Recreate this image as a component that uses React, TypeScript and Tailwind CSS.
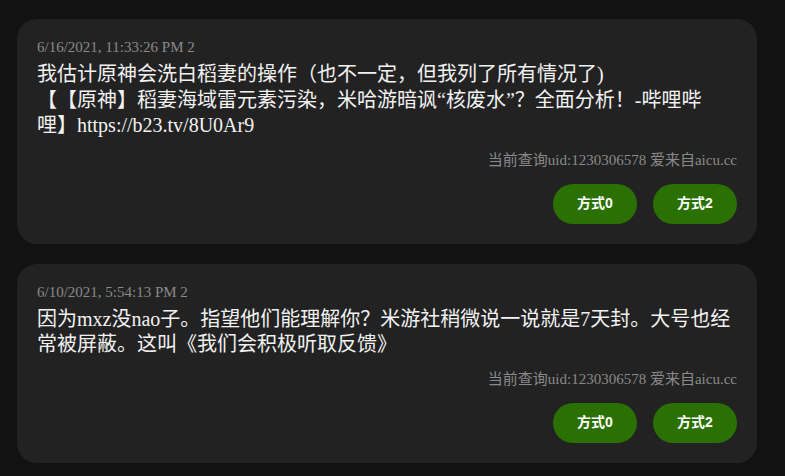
const items = [
  {
    date: '6/16/2021, 11:33:26 PM 2',
    lines: [
      '我估计原神会洗白稻妻的操作（也不一定，但我列了所有情况了)',
      '【【原神】稻妻海域雷元素污染，米哈游暗讽“核废水”？全面分析！-哔哩哔哩】https://b23.tv/8U0Ar9',
    ],
  },
  {
    date: '6/10/2021, 5:54:13 PM 2',
    lines: ['因为mxz没nao子。指望他们能理解你？米游社稍微说一说就是7天封。大号也经常被屏蔽。这叫《我们会积极听取反馈》'],
  },
]

function Card({ date, lines }: { date: string; lines: string[] }) {
  return (
    <div className="bg-[#222222] rounded-[20px] px-5 pt-[18px] pb-5 flex flex-col">
      <div className="text-[15px] leading-5 text-[#8a8a8a]">{date}</div>
      <div className="mt-[5px] text-[20px] leading-[25.5px] text-[#f2f2f2] [text-spacing-trim:space-all]">
        {lines.map((l, i) => (
          <div key={i}>{l}</div>
        ))}
      </div>
      <div className="mt-[11px] self-end text-[15px] leading-5 text-[#8a8a8a]">当前查询uid:1230306578 爱来自aicu.cc</div>
      <div className="mt-[14px] flex justify-end gap-4">
        {['方式0', '方式2'].map((b) => (
          <button
            key={b}
            className="h-10 w-[84px] rounded-full bg-[#2a7003] text-white text-[14px] font-bold [font-family:'Liberation_Sans','Noto_Sans_CJK_SC',sans-serif]"
          >
            {b}
          </button>
        ))}
      </div>
    </div>
  )
}

export default function App() {
  return (
    <div className="min-h-screen bg-[#121212] pt-[19px] pl-[17px] [font-family:'Liberation_Serif','Noto_Sans_CJK_SC',serif]">
      <div className="w-[740px] flex flex-col gap-5">
        {items.map((it, i) => (
          <Card key={i} {...it} />
        ))}
      </div>
    </div>
  )
}
